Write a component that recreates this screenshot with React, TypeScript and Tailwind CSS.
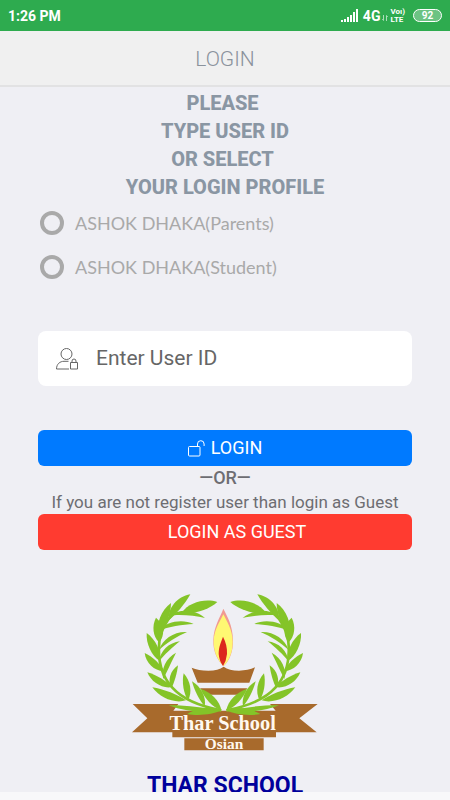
import { useState } from "react";

type LeafProps = [number, number, number, number, number, number];

// base x, base y, tip x, tip y, bulge on one side, bulge on the other
const leaves: LeafProps[] = [
  [146, 106, 211, 28, 26, 6],
  [186, 82, 292, 51, 22, 16],
  [150, 92, 255, 99, 24, -6],
  [116, 150, 153, 54, 20, 12],
  [118, 136, 221, 117, 22, -5],
  [117, 172, 108, 98, 16, 22],
  [118, 194, 201, 141, 22, -5],
  [120, 228, 80, 144, 16, 16],
  [118, 228, 180, 169, 20, -3],
  [132, 258, 74, 204, 20, 8],
  [130, 282, 168, 203, 20, 0],
  [156, 306, 82, 262, 20, 7],
  [154, 310, 174, 241, 18, 4],
  [198, 346, 97, 307, 22, 7],
  [204, 346, 191, 265, 10, 17],
  [300, 378, 146, 361, 13, 6],
  [254, 364, 216, 289, 6, 17],
  [304, 376, 242, 312, 12, 16],
  [304, 376, 202, 387, 10, 15],
];

function leafPath([x1, y1, x2, y2, a, b]: LeafProps) {
  const dx = x2 - x1;
  const dy = y2 - y1;
  const len = Math.hypot(dx, dy);
  const nx = dy / len;
  const ny = -dx / len;
  const at = (t: number, off: number) => `${x1 + dx * t + nx * off} ${y1 + dy * t + ny * off}`;
  return `M${x1} ${y1}C${at(0.25, a)} ${at(0.7, a)} ${x2} ${y2}C${at(0.7, -b)} ${at(0.25, -b)} ${x1} ${y1}Z`;
}

function Branch() {
  return (
    <g fill="#84c428">
      {leaves.map((leaf) => (
        <path key={leaf.join()} d={leafPath(leaf)} />
      ))}
      <path
        d="M304 376C245 365 190 345 157 308C120 268 113 220 118 170Q122 125 165 78"
        fill="none"
        stroke="#84c428"
        strokeWidth="8"
      />
    </g>
  );
}

function SchoolLogo() {
  return (
    <svg viewBox="30 21 570 480" className="block h-[160px] w-[190px]" role="img" aria-label="Thar School Osian">
      <g fill="#a86a2c">
        <path d="M38 357H175L160 377H467L450 357H593L538 400L590 442H468V457H157V442H36L82 400Z" />
        <path d="M193 460H431V496H193Z" />
        <path d="M215 248Q235 257 265 257Q295 257 311 245Q327 257 357 257Q384 257 405 247L388 293H233Z" />
        <path d="M240 310H382L364 329H258Z" />
      </g>
      <path d="M310 71C322 95 338 120 339 165C340 200 328 228 311 243C292 226 279 200 280 165C281 125 300 98 310 71Z" fill="#f19a92" />
      <path d="M310 88C320 108 338 135 338 170C338 204 326 228 311 243C294 227 281 202 281 170C281 135 300 110 310 88Z" fill="#fff872" />
      <path d="M309 155C318 172 322 188 321 207Q319 228 309 243Q298 228 296 207C296 185 303 172 309 155Z" fill="#dc281e" />
      <Branch />
      <g transform="matrix(-1 0 0 1 623 0)">
        <Branch />
      </g>
      <g fill="#fff8ef" textAnchor="middle" className="font-['Liberation_Serif',serif] font-bold">
        <text x="308" y="434" fontSize="61">Thar School</text>
        <text x="312" y="493" fontSize="46">Osian</text>
      </g>
    </svg>
  );
}

function StatusBar() {
  return (
    <div className="flex h-[31px] shrink-0 items-center justify-between bg-[#2eab4f] px-2 text-white">
      <span className="text-sm font-bold">1:26 PM</span>
      <div className="flex items-center">
        <svg viewBox="0 0 18 13" className="h-[13px] w-[18px]" fill="currentColor" aria-hidden="true">
          <path d="M0 11h2v2H0zM3 10h2v3H3zM6 8h2v5H6zM9 6h2v7H9zM12 3h2v10h-2zM15 0h2v13h-2z" />
        </svg>
        <span className="ml-1 text-sm font-bold">4G</span>
        <svg viewBox="0 0 6 6" className="mt-1 ml-[2px] h-[6px] w-[6px] opacity-60" fill="none" stroke="currentColor" aria-hidden="true">
          <path d="M1.5 0v5.5L.3 4M4.5 6V.5L5.7 2" />
        </svg>
        <div className="ml-[2px] flex flex-col text-[8px] leading-[8px] font-bold">
          <span>Voı)</span>
          <span>LTE</span>
        </div>
        <span className="ml-2 flex h-[13px] w-[29px] items-center justify-center rounded-full border border-white bg-[#6cc383] text-[10px] font-bold">
          92
        </span>
      </div>
    </div>
  );
}

const profiles = ["ASHOK DHAKA(Parents)", "ASHOK DHAKA(Student)"];

export default function App() {
  const [profile, setProfile] = useState("");
  const [userId, setUserId] = useState("");

  return (
    <div className="flex h-screen flex-col bg-[#efeff4] font-['Roboto',sans-serif]">
      <StatusBar />
      <header className="flex h-14 shrink-0 items-center justify-center border-b-2 border-[#e2e2e3] bg-[#f0f0f0] pt-1">
        <h1 className="text-[21px] font-light text-[#8a929c]">LOGIN</h1>
      </header>

      <main className="min-h-0 flex-1 overflow-y-auto [scrollbar-width:none]">
        <form className="px-[38px]" onSubmit={(e) => e.preventDefault()}>
          <h2 className="pt-[2px] text-center text-xl leading-7 font-extrabold text-[#8a96a3]">
            PLEASE&nbsp;
            <br />
            TYPE USER ID
            <br />
            OR SELECT&nbsp;
            <br />
            YOUR LOGIN PROFILE
          </h2>

          <div>
            {profiles.map((name) => (
              <label key={name} className="flex h-11 items-center gap-[11px] pl-[2px] font-['Lato',sans-serif] text-lg text-[#a9a9a9]">
                <input
                  type="radio"
                  name="profile"
                  value={name}
                  checked={profile === name}
                  onChange={() => setProfile(name)}
                  className="h-6 w-6 appearance-none rounded-full border-4 border-[#a9a9a9] checked:bg-[#007aff]"
                />
                {name}
              </label>
            ))}
          </div>

          <div className="mt-[42px] flex h-[55px] items-center rounded-lg bg-white pl-[18px]">
            <label htmlFor="user-id" aria-label="User ID">
              <svg viewBox="0 0 22 22" className="h-[22px] w-[22px]" fill="none" stroke="#666" aria-hidden="true">
                <circle cx="10.5" cy="6" r="5.5" />
                <path d="M13 21H.5C.5 16 4 13.300 8 13.300h4.500M14.500 14.500h7v6.500h-7zM16 14.500v-1.500a2 2 0 0 1 4 0v1.500" />
              </svg>
            </label>
            <input
              id="user-id"
              type="text"
              placeholder="Enter User ID"
              value={userId}
              onChange={(e) => setUserId(e.target.value)}
              className="ml-[18px] min-w-0 flex-1 bg-transparent text-[21px] text-[#555] outline-none placeholder:text-[#666]"
            />
          </div>

          <button type="submit" className="mt-11 flex h-9 w-full items-center justify-center gap-[6px] rounded-md bg-[#007aff] text-lg text-white">
            <svg viewBox="0 0 17 17" className="h-[17px] w-[17px]" fill="none" stroke="currentColor" aria-hidden="true">
              <path d="M1.500 6.500h9.500q1 0 1 1v7.500q0 1-1 1H1.500q-1 0-1-1V7.500q0-1 1-1zM9.500 6.500V4a3.300 3.300 0 0 1 6.600 0v2" />
            </svg>
            LOGIN
          </button>
          <p className="text-center text-lg leading-6 font-medium text-[#6d6d72]">—OR—</p>
          <p className="text-center text-[17px] leading-6 whitespace-nowrap text-[#6d6d72]">
            If you are not register user than login as Guest
          </p>
          <button type="button" className="h-9 w-full rounded-md bg-[#ff3b30] pl-6 text-lg text-white">
            LOGIN AS GUEST
          </button>
        </form>

        <div className="mt-[42px] flex flex-col items-center">
          <SchoolLogo />
          <p className="mt-[22px] text-[23px] leading-6 font-bold text-[#00009c]">THAR SCHOOL</p>
        </div>
      </main>

      <div className="h-2 shrink-0 bg-[#f8f8fa]" />
    </div>
  );
}
